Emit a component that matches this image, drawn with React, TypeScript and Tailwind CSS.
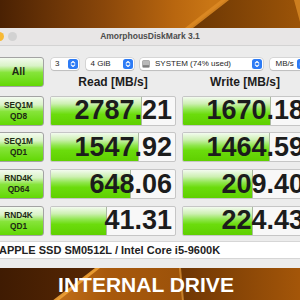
import React from "react";

type Row = { top: string; bottom: string; read: string; readBar: number; write: string; writeBar: number };

const rows: Row[] = [
  { top: "SEQ1M", bottom: "QD8", read: "2787.21", readBar: 91, write: "1670.18", writeBar: 88 },
  { top: "SEQ1M", bottom: "QD1", read: "1547.92", readBar: 88, write: "1464.59", writeBar: 87 },
  { top: "RND4K", bottom: "QD64", read: "648.06", readBar: 80, write: "209.40", writeBar: 70 },
  { top: "RND4K", bottom: "QD1", read: "41.31", readBar: 56, write: "224.43", writeBar: 70 },
];

const font = "font-['Liberation_Sans','Helvetica','Arial',sans-serif]";

function Stepper() {
  return (
    <svg width="10" height="10" viewBox="0 0 10 10" className="shrink-0">
      <rect x="0" y="0" width="10" height="10" rx="2.5" fill="#2d7bf5" />
      <path d="M3.2 4.1 L5 2.5 L6.8 4.1" stroke="white" strokeWidth="1.1" fill="none" strokeLinecap="round" strokeLinejoin="round" />
      <path d="M3.2 5.9 L5 7.5 L6.8 5.9" stroke="white" strokeWidth="1.1" fill="none" strokeLinecap="round" strokeLinejoin="round" />
    </svg>
  );
}

function Select({ width, children }: { width: string; children: React.ReactNode }) {
  return (
    <div
      className={`flex h-[12px] shrink-0 items-center justify-between rounded-[3px] bg-white pr-[1px] shadow-[0_0_0_0.5px_rgba(0,0,0,0.18),0_1px_1px_rgba(0,0,0,0.12)] ${width}`}
    >
      <div className="flex items-center gap-[5px] pl-[4px] text-[8px] leading-none text-[#262626]">{children}</div>
      <Stepper />
    </div>
  );
}

function DiskIcon() {
  return (
    <svg width="8" height="8" viewBox="0 0 8 8" className="-ml-[2px]">
      <rect x="0.5" y="0.5" width="7" height="7" rx="1" fill="#b9b9b9" stroke="#8c8c8c" strokeWidth="0.6" />
      <rect x="1" y="5.2" width="6" height="1.8" fill="#7d7d7d" />
    </svg>
  );
}

function Label({ top, bottom }: { top: string; bottom: string }) {
  return (
    <div className="flex h-[30px] flex-col items-center justify-center rounded-[3px] border border-[#a3a3a3] bg-[linear-gradient(180deg,#f4fbf0_0%,#d9f3c6_28%,#86e43a_52%,#62d804_100%)] text-[8.3px] font-bold leading-[11px] text-[#1d2a14]">
      <span>{top}</span>
      <span>{bottom}</span>
    </div>
  );
}

function Value({ value, bar }: { value: string; bar: number }) {
  return (
    <div className="relative flex h-[30px] items-center justify-end overflow-hidden rounded-[2px] border border-[#c6c6c6] bg-[#f8f8f8] pr-[3px]">
      <div
        className="absolute inset-y-0 left-0 border-r border-[#a9b8a0] bg-[linear-gradient(180deg,#f3fbef_0%,#cdf0b2_24%,#8ee64b_45%,#6bdc0c_62%,#5fd000_100%)]"
        style={{ width: bar }}
      />
      <span className="relative text-[27px] font-bold leading-none text-[#1c1c1c]">{value}</span>
    </div>
  );
}

export default function App() {
  return (
    <div className={`h-[300px] w-[300px] overflow-hidden bg-[#ececec] ${font}`}>
      <svg width="300" height="28" viewBox="0 0 300 28" className="block">
        <defs>
          <linearGradient id="wt" x1="0" y1="0" x2="1" y2="0">
            <stop offset="0" stopColor="#4a2103" />
            <stop offset="0.35" stopColor="#8a470a" />
            <stop offset="0.58" stopColor="#b8660f" />
            <stop offset="0.7" stopColor="#c97615" />
          </linearGradient>
          <linearGradient id="wr" x1="0" y1="0" x2="1" y2="0">
            <stop offset="0" stopColor="#6a3604" />
            <stop offset="1" stopColor="#9c5408" />
          </linearGradient>
        </defs>
        <rect width="300" height="28" fill="url(#wt)" />
        <polygon points="226,0 300,0 300,28 190,28" fill="url(#wr)" />
        <polygon points="221,0 229,0 193,28 185,28" fill="#dd8b24" opacity="0.85" />
        <polygon points="294,0 300,0 300,22" fill="#d98a26" opacity="0.8" />
      </svg>

      <div className="-ml-[7px] w-[320px]">
        <div className="flex h-[18px] items-center border-b border-[#d3d3d3] bg-[#e8e6e6]">
          <div className="flex w-[34px] shrink-0 items-center gap-[4px] pl-[1.5px]">
            <span className="h-[9px] w-[9px] rounded-full bg-[#f7b935]" />
            <span className="h-[9px] w-[9px] rounded-full bg-[#d2d2d2]" />
          </div>
          <div className="flex-1 text-center text-[8.5px] font-bold text-[#4d4d4d]">AmorphousDiskMark 3.1</div>
          <div className="w-[40px] shrink-0" />
        </div>

        <div className="grid grid-cols-[51px_126px_126px] gap-x-[6px] gap-y-[6.7px] pt-[11px]">
          <div className="flex h-[30px] items-center justify-center rounded-[3px] border border-[#a3a3a3] bg-[linear-gradient(180deg,#f4fbf0_0%,#d9f3c6_28%,#86e43a_52%,#62d804_100%)] text-[10.5px] font-bold text-[#1d2a14]">
            All
          </div>
          <div className="col-span-2 flex flex-col">
            <div className="ml-[1px] mt-[1px] flex gap-[6.5px]">
              <Select width="w-[28px]">3</Select>
              <Select width="w-[48px]">
                <span className="pl-[1px]">4 GiB</span>
              </Select>
              <Select width="w-[123px]">
                <DiskIcon />
                <span>SYSTEM (74% used)</span>
              </Select>
              <Select width="w-[38px]">
                <span className="pl-[2px]">MB/s</span>
              </Select>
            </div>
            <div className="mt-[5px] grid grid-cols-2 gap-x-[6px] text-center text-[12px] font-bold leading-[14px] text-[#1c1c1c]">
              <span>Read [MB/s]</span>
              <span>Write [MB/s]</span>
            </div>
          </div>

          {rows.map((r, i) => (
            <React.Fragment key={i}>
              <Label top={r.top} bottom={r.bottom} />
              <Value value={r.read} bar={r.readBar} />
              <Value value={r.write} bar={r.writeBar} />
            </React.Fragment>
          ))}
        </div>

        <div className="mt-[5px] flex h-[18px] items-center border-y border-[#d6d6d6] bg-white pl-[6px] text-[11px] font-bold text-[#222]">
          APPLE SSD SM0512L / Intel Core i5-9600K
        </div>
        <div className="h-[9px] bg-[#ececec]" />
      </div>

      <div className="relative flex h-[33px] items-center justify-center pr-[8px]">
        <svg width="300" height="33" viewBox="0 0 300 33" className="absolute inset-0">
          <defs>
            <linearGradient id="bl" x1="0" y1="0" x2="1" y2="0">
              <stop offset="0" stopColor="#3f1b02" />
              <stop offset="1" stopColor="#8a4207" />
            </linearGradient>
            <linearGradient id="bm" x1="0" y1="0" x2="1" y2="0">
              <stop offset="0" stopColor="#c2701a" />
              <stop offset="0.4" stopColor="#a8590c" />
              <stop offset="1" stopColor="#9c520a" />
            </linearGradient>
            <linearGradient id="br" x1="0" y1="0" x2="1" y2="0">
              <stop offset="0" stopColor="#6e3604" />
              <stop offset="1" stopColor="#a45609" />
            </linearGradient>
          </defs>
          <rect width="300" height="33" fill="url(#bl)" />
          <polygon points="97,0 180,0 183,33 55,33" fill="url(#bm)" />
          <polygon points="180,0 300,0 300,33 183,33" fill="url(#br)" />
          <polygon points="95,0 100,0 58,33 52,33" fill="#f0a235" opacity="0.9" />
          <polygon points="179,0 181,0 184,33 182,33" fill="#e39a3a" opacity="0.7" />
        </svg>
        <span className="relative text-[21px] font-bold leading-none text-white">INTERNAL DRIVE</span>
      </div>
    </div>
  );
}
